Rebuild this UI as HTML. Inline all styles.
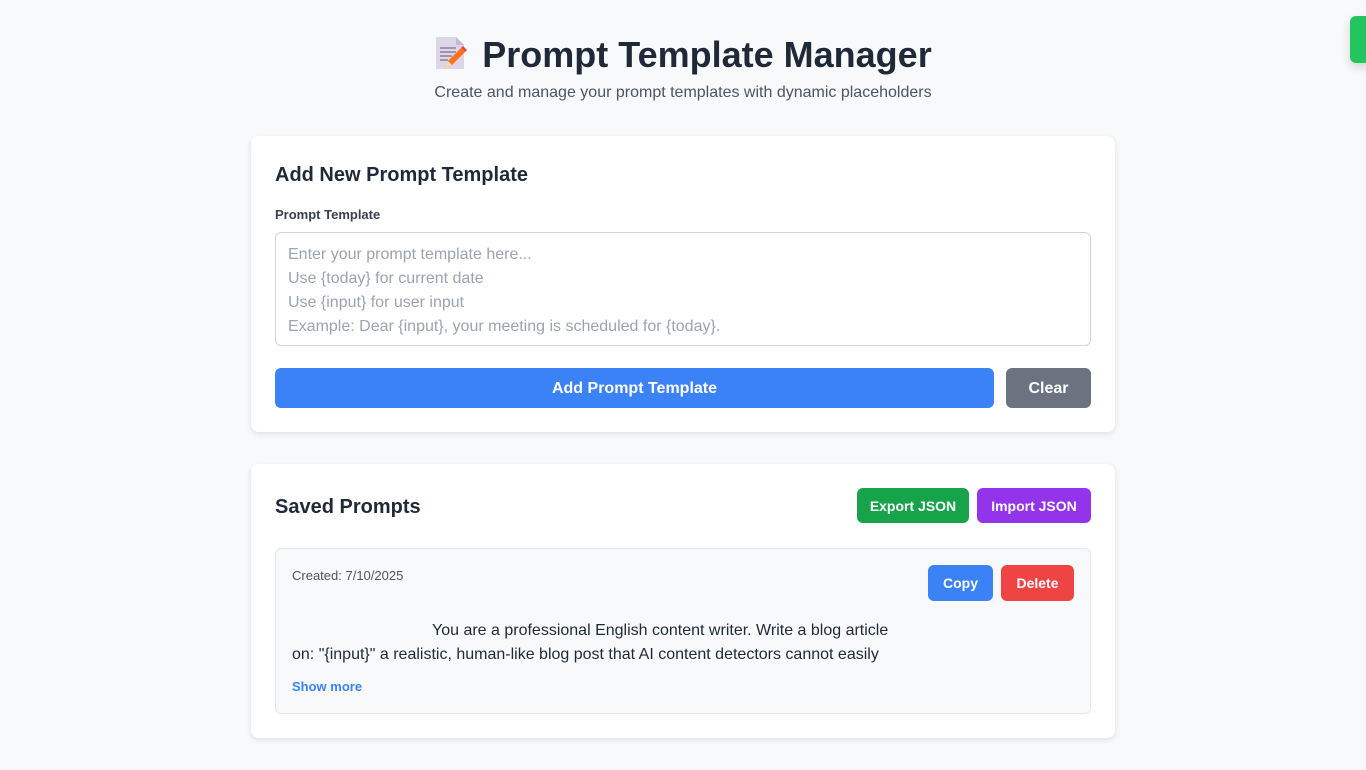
<!DOCTYPE html>
<html><head><meta charset="utf-8"><style>
*{box-sizing:border-box;margin:0;padding:0}
body{width:1366px;height:770px;background:#f8f9fb;font-family:"Liberation Sans","DejaVu Sans",sans-serif;color:#1f2937;position:relative;overflow:hidden}
h1{position:absolute;top:32px;left:0;width:1366px;text-align:center;font-size:36px;font-weight:bold;color:#1f2937;height:46px;line-height:46px}
.sub{position:absolute;top:84px;width:1366px;text-align:center;font-size:16px;color:#4b5563}
.card{position:absolute;left:251px;width:864px;background:#fff;border-radius:8px;box-shadow:0 2px 6px rgba(0,0,0,.1)}
.btn{position:absolute;border-radius:6px;color:#fff;font-weight:bold;text-align:center}
.toast{position:absolute;left:1350px;top:16px;width:30px;height:47px;background:#22c55e;border-radius:6px;box-shadow:0 4px 10px rgba(0,0,0,.15)}
</style></head><body>
<h1><span style="display:inline-block;vertical-align:middle;margin-right:14px;position:relative;top:1px"><svg width="34" height="36" viewBox="0 0 34 36"><path d="M2 2h20l8 8v24H2z" fill="#ddd6e8"/><path d="M22 2v8h8z" fill="#c4bad4"/><g stroke="#8b7f9e" stroke-width="1.5"><path d="M6 13h16M6 17h16M6 21h12M6 25h8"/></g><path d="M11 33l3-7 13-13 4 4-13 13z" fill="#f97316"/><path d="M27 13l4 4 2-2-4-4z" fill="#ef4444"/><path d="M11 33l3-7 4 4z" fill="#fcd9b6"/></svg></span>Prompt Template Manager</h1>
<div class="sub">Create and manage your prompt templates with dynamic placeholders</div>
<div class="toast"></div>

<div class="card" style="top:136px;height:296px">
<div style="position:absolute;left:24px;top:28px;font-size:20px;font-weight:bold;color:#1f2937">Add New Prompt Template</div>
<div style="position:absolute;left:24px;top:71px;font-size:13px;font-weight:bold;color:#374151">Prompt Template</div>
<div style="position:absolute;left:24px;top:96px;width:816px;height:114px;border:1px solid #d1d5db;border-radius:6px;padding:10px 12px;font-size:16px;line-height:24px;color:#9ca3af">Enter your prompt template here...<br>Use {today} for current date<br>Use {input} for user input<br>Example: Dear {input}, your meeting is scheduled for {today}.</div>
<div class="btn" style="left:24px;top:232px;width:719px;height:40px;line-height:42px;background:#3b82f6;font-size:16px">Add Prompt Template</div>
<div class="btn" style="left:755px;top:232px;width:85px;height:40px;line-height:42px;background:#6b7280;font-size:16px">Clear</div>
</div>

<div class="card" style="top:464px;height:274px">
<div style="position:absolute;left:24px;top:32px;font-size:20px;font-weight:bold;color:#1f2937">Saved Prompts</div>
<div class="btn" style="left:606px;top:24px;width:112px;height:35px;line-height:36px;background:#16a34a;font-size:14px">Export JSON</div>
<div class="btn" style="left:726px;top:24px;width:114px;height:35px;line-height:36px;background:#9333ea;font-size:14px">Import JSON</div>
<div style="position:absolute;left:24px;top:84px;width:816px;height:166px;background:#f8f9fb;border:1px solid #e5e7eb;border-radius:6px">
<div style="position:absolute;left:16px;top:19px;font-size:13px;color:#4b5563">Created: 7/10/2025</div>
<div class="btn" style="left:652px;top:16px;width:65px;height:36px;line-height:36px;background:#3b82f6;font-size:14px">Copy</div>
<div class="btn" style="left:725px;top:16px;width:73px;height:36px;line-height:36px;background:#ef4444;font-size:14px">Delete</div>
<div style="position:absolute;left:16px;top:70px;width:600px;font-size:16px;line-height:24px;color:#1f2937"><span style="padding-left:140px">You are a professional English content writer. Write a blog article</span><br>on: "{input}" a realistic, human-like blog post that AI content detectors cannot easily</div>
<div style="position:absolute;left:16px;top:130px;font-size:13px;font-weight:bold;color:#3b82f6">Show more</div>
</div>
</div>
</body></html>
